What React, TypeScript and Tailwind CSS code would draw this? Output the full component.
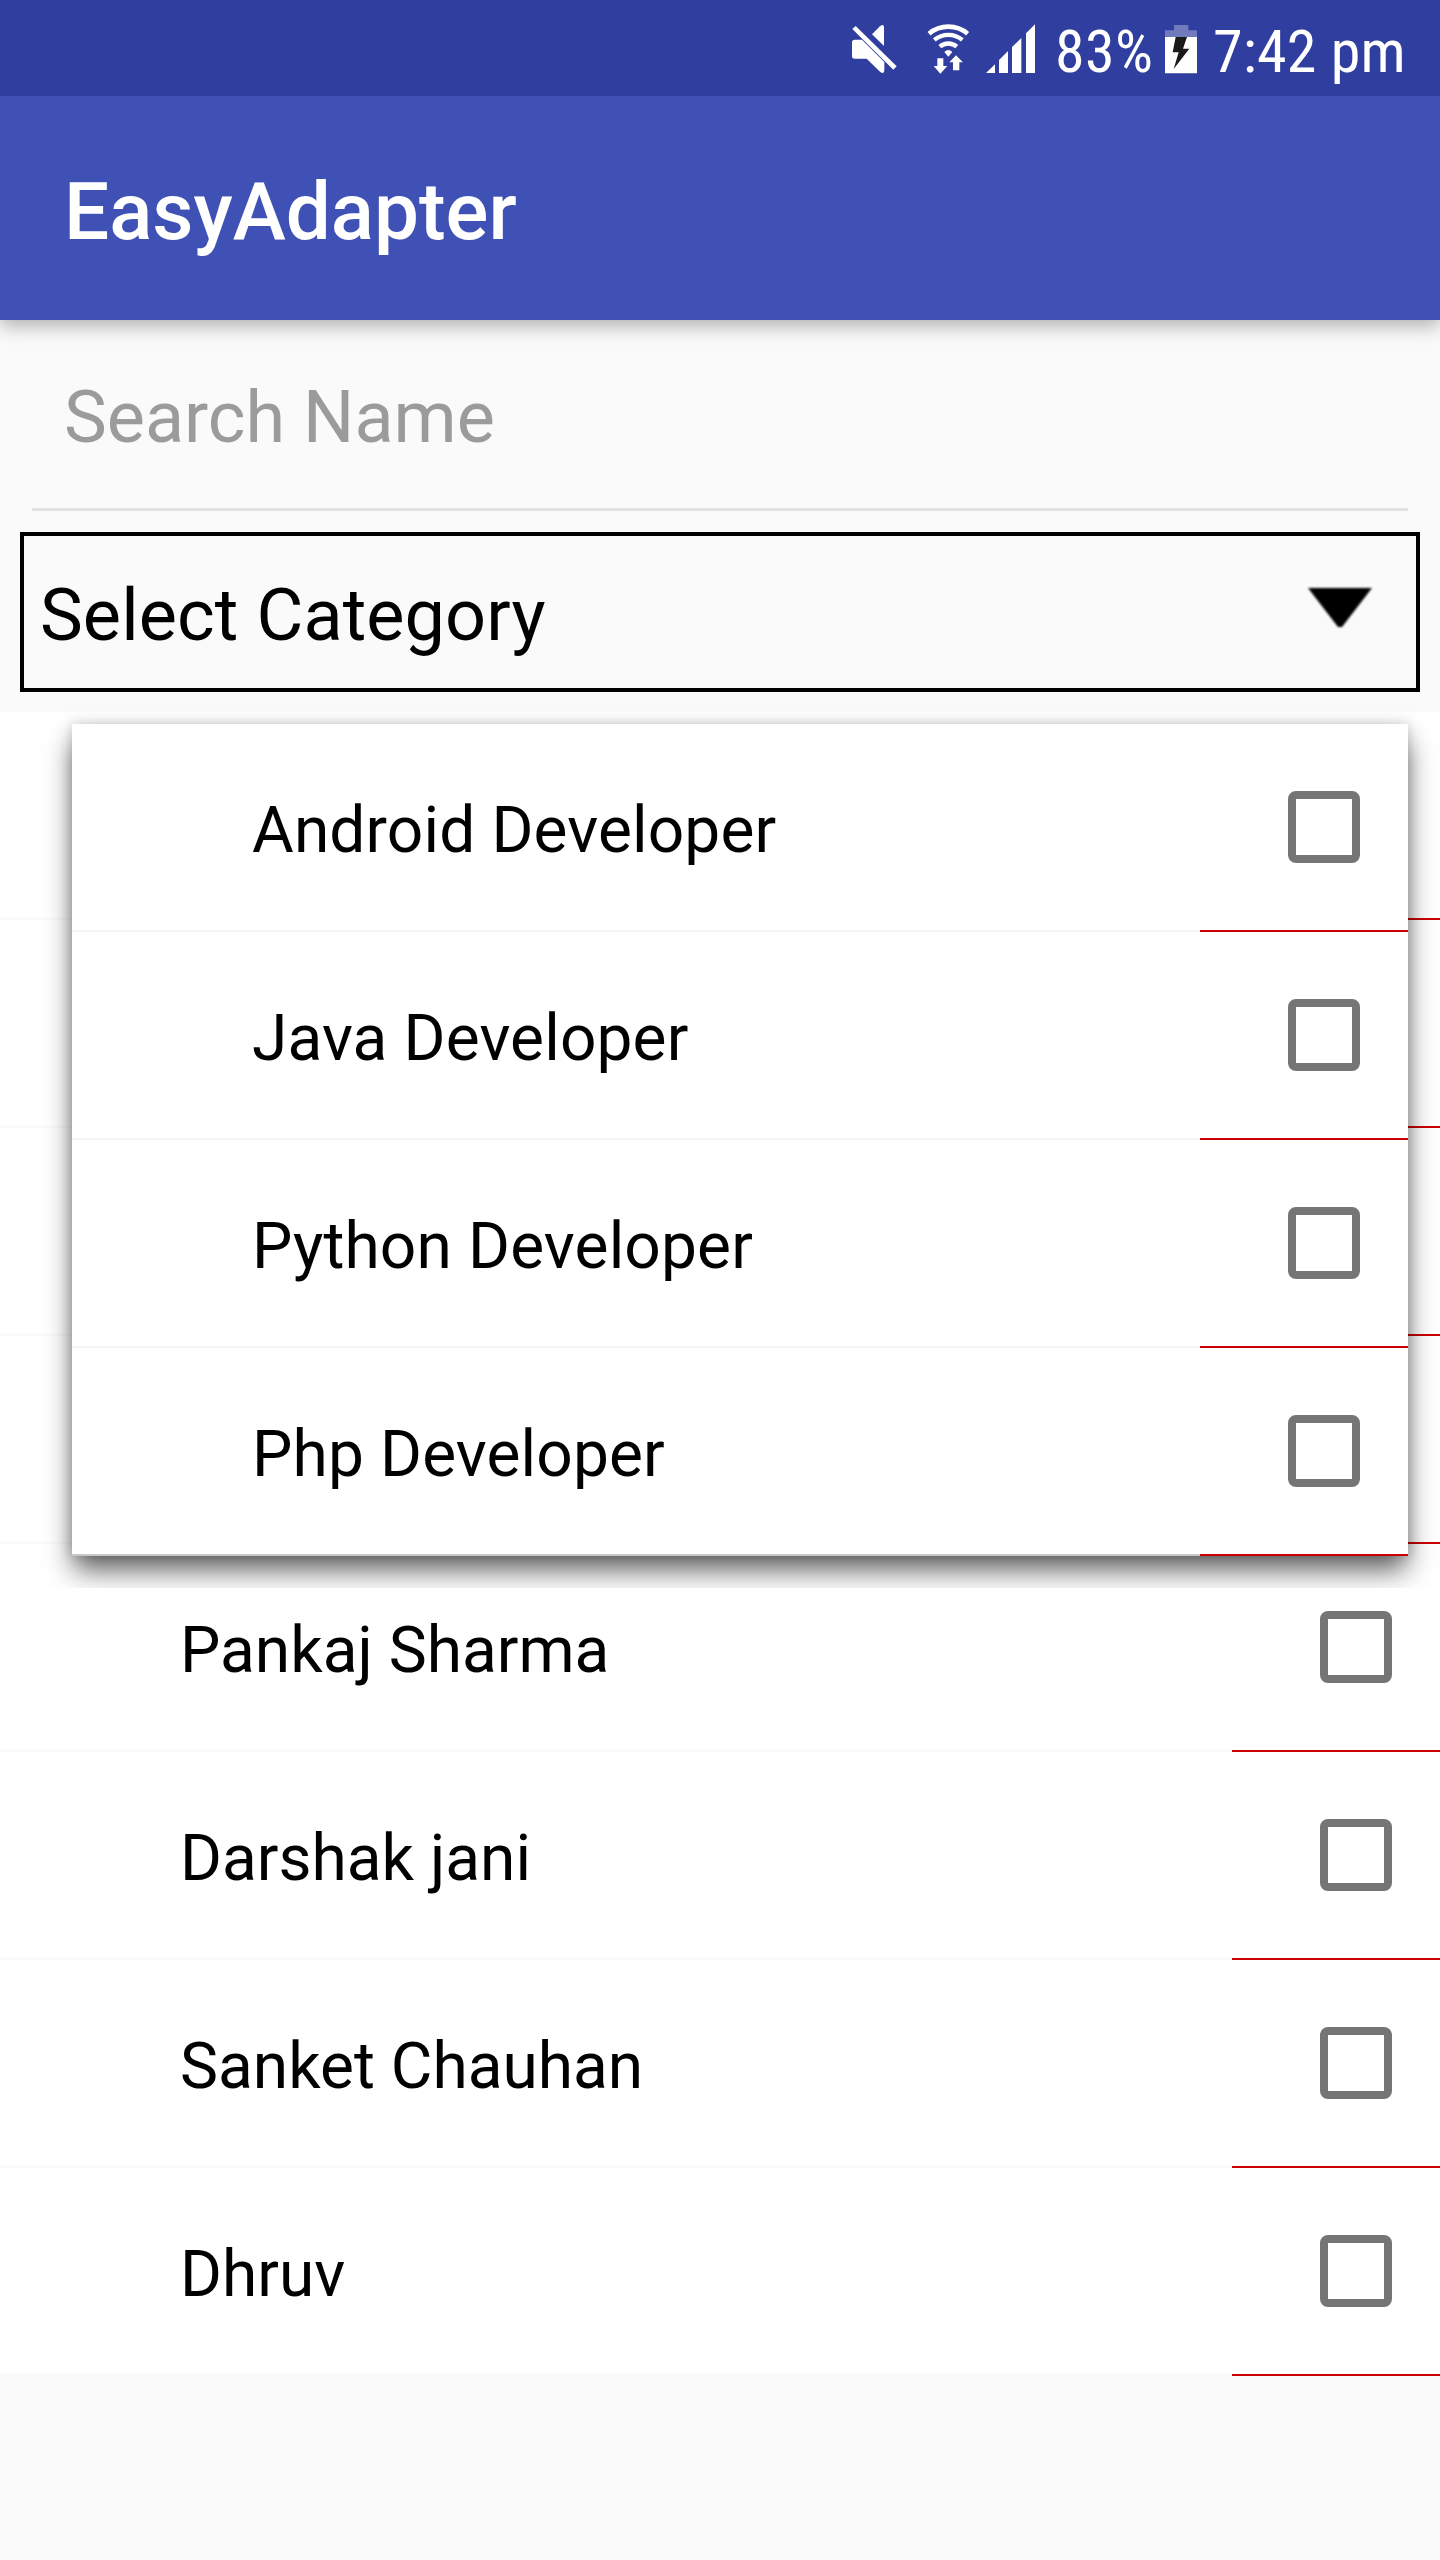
const categories = ["Android Developer", "Java Developer", "Python Developer", "Php Developer"];
const names = ["Pankaj Sharma", "Darshak jani", "Sanket Chauhan", "Dhruv"];

function MuteIcon() {
  return (
    <svg className="mt-6 h-[50px] w-[45px] shrink-0" viewBox="36 72 135 150" fill="white">
      <path d="M44 119H66L133 186V211Q132 224 120 215L80 176H44Q36 176 36 168V127Q36 119 44 119Z" />
      <path d="M37 87L47 78L170 199L160 209Z" />
      <path d="M96 103L120 79Q131 70 132 81V138Z" />
    </svg>
  );
}

function WifiIcon() {
  return (
    <svg className="mt-[23px] ml-[30px] h-[51px] w-[43px] shrink-0" viewBox="261 69 129 153" fill="none" stroke="white">
      <path d="M267.1 101.1A90 90 0 0 1 382.9 101.1" strokeWidth="14" />
      <path d="M282.9 119.8A65.5 65.5 0 0 1 367.1 119.8" strokeWidth="13" />
      <path d="M299.6 139.7A39.5 39.5 0 0 1 350.4 139.7" strokeWidth="13" />
      <path d="M313 156Q325 144 337 156L325 170Z" fill="white" stroke="none" />
      <path d="M292 175H310V198H322L301 221L281 198H292Z" fill="white" stroke="none" />
      <path d="M348 166L369 187H358V211H339V187H328Z" fill="white" stroke="none" />
    </svg>
  );
}

function SignalIcon() {
  return (
    <svg className="mt-6 ml-4 h-[49px] w-[49px] shrink-0" viewBox="438 72 147 147" fill="white">
      <path d="M438 219L465 193V219ZM477 219V180L504 153V219ZM516 219V141L544 114V219ZM558 219V100L585 73V219Z" />
    </svg>
  );
}

function BatteryIcon() {
  return (
    <svg className="mt-[25px] h-[49px] w-8 shrink-0" viewBox="75 75 96 147">
      <path d="M102 75H145V91H171V111H75V91H102Z" fill="#707bbc" />
      <path d="M75 111H171V220H75Z" fill="white" />
      <path d="M107 111H141L129 146H148L101 207L116 157H98Z" fill="#1a1a1a" />
    </svg>
  );
}

function Row({ label, divider }: { label?: string; divider: string }) {
  return (
    <div className={`flex h-[208px] flex-col ${divider}`}>
      <div className="flex h-[206px] shrink-0 items-center justify-between bg-white pr-12 pl-[180px]">
        <span className="mt-[7px] text-[64px] leading-[75px] text-black">{label}</span>
        <span className="h-[72px] w-[72px] rounded-lg border-8 border-[#757575]" />
      </div>
      <div className="h-0.5 w-52 self-end bg-[#cc0000]" />
    </div>
  );
}

export default function App() {
  return (
    <div className="relative h-[2560px] w-[1440px] overflow-hidden bg-[#fafafa] font-[Roboto,sans-serif]">
      <div className="relative z-10 flex h-24 items-start bg-[#303f9f] pl-[852px] text-[60px] leading-[71px] whitespace-nowrap text-white [font-stretch:75%]">
        <MuteIcon />
        <WifiIcon />
        <SignalIcon />
        <span className="mt-4 ml-5 w-[110px] font-['Roboto_Condensed','Roboto',sans-serif] tracking-[0.4px]">83%</span>
        <BatteryIcon />
        <span className="mt-4 ml-4 font-['Roboto_Condensed','Roboto',sans-serif] tracking-[0.2px]">7:42 pm</span>
      </div>
      <header className="flex h-56 items-center bg-[#3f51b5] px-16 shadow-[0_6px_18px_rgba(0,0,0,0.3)]">
        <h1 className="mt-2 text-[80px] leading-[94px] font-medium text-white">EasyAdapter</h1>
      </header>

      <div className="mx-8 mb-[21px] flex h-[191px] items-center border-b-3 border-[#e2e2e2] px-8 pt-[7px]">
        <span className="text-[72px] leading-[85px] text-[#9b9b9b]">Search Name</span>
      </div>

      <button className="mx-5 flex h-40 w-[1400px] items-center justify-between border-4 border-black pr-[42px] pl-4">
        <span className="mt-[7px] text-[72px] leading-[85px] tracking-[0.1px] text-black">Select Category</span>
        <svg className="-mt-2 h-12 w-[68px] blur-[0.8px]" viewBox="0 0 68 48">
          <path d="M2 4H66L36 43H32Z" />
        </svg>
      </button>

      <main className="mt-5">
        {["a", "b", "c", "d"].map((id) => (
          <Row key={id} divider="bg-[#fafafa]" />
        ))}
        {names.map((name) => (
          <Row key={name} label={name} divider="bg-[#fafafa]" />
        ))}
      </main>

      <div className="absolute top-[724px] left-[72px] w-[1336px] tracking-[0.14px] shadow-[0_16px_26px_-2px_rgba(0,0,0,0.62),0_0_12px_rgba(0,0,0,0.18)] [clip-path:inset(-24px_-32px_-32px_-32px)]">
        {categories.map((name) => (
          <Row key={name} label={name} divider="bg-[#f4f4f4] last:bg-[#c8c8c8]" />
        ))}
      </div>
    </div>
  );
}
